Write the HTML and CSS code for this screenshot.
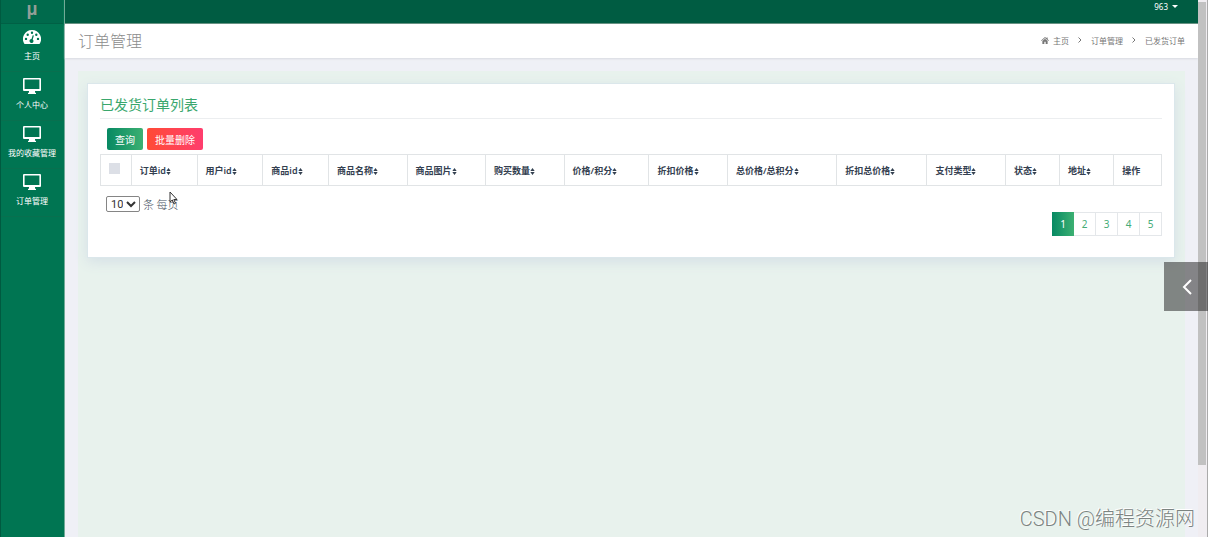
FILE: index.html
```html
<!DOCTYPE html>
<html lang="zh-CN">
<head>
<meta charset="utf-8">
<title>订单管理</title>
<link rel="stylesheet" href="styles.css">
</head>
<body>
<svg class="defs" aria-hidden="true">
  <symbol id="monitor" viewBox="0 0 18 16"><path fill-rule="evenodd" d="M1 0h16a1 1 0 0 1 1 1v11a1 1 0 0 1-1 1h-5v1.500l1 .5v1H5v-1l1-.5V13H1a1 1 0 0 1-1-1V1a1 1 0 0 1 1-1zm.6 1.500v9.500h14.800V1.500z"/></symbol>
  <symbol id="gauge" viewBox="0 0 18 14"><path fill-rule="evenodd" d="M9 0a9 9 0 0 1 7.500 14h-15A9 9 0 0 1 9 0zM3 7.700a1.200 1.200 0 1 0 0 2.400 1.200 1.200 0 0 0 0-2.400zM4.700 3.500a1.200 1.200 0 1 0 0 2.400 1.200 1.200 0 0 0 0-2.400zM9 1.600A1.200 1.200 0 1 0 9 4a1.200 1.200 0 0 0 0-2.400zm4.300 1.900a1.200 1.200 0 1 0 0 2.400 1.200 1.200 0 0 0 0-2.400zM15 7.700a1.200 1.200 0 1 0 0 2.400 1.200 1.200 0 0 0 0-2.400zM9.700 5.200 8.500 9a2 2 0 1 0 1.200.4l1.200-3.900z"/></symbol>
  <symbol id="sort" viewBox="0 0 5 8"><path d="M0 3.400 2.500 0 5 3.400zM0 4.600h5L2.500 8z"/></symbol>
</svg>
<div class="app">
  <nav class="sidebar">
    <div class="brand">μ</div>
    <a class="nav-item" href="#"><svg class="nav-icon"><use href="#gauge"/></svg>主页</a>
    <a class="nav-item" href="#"><svg class="nav-icon"><use href="#monitor"/></svg>个人中心</a>
    <a class="nav-item" href="#"><svg class="nav-icon"><use href="#monitor"/></svg>我的收藏管理</a>
    <a class="nav-item" href="#"><svg class="nav-icon"><use href="#monitor"/></svg>订单管理</a>
  </nav>
  <div class="page">
    <header class="topbar"><button class="user" type="button">963 <span class="caret"></span></button></header>
    <div class="titlebar">
      <h1>订单管理</h1>
      <nav class="crumbs">
        <svg class="home" viewBox="0 0 18 16"><path d="M9 0 0 8l1.200 1.300L9 2.500l7.800 6.800L18 8l-3-2.700V1h-2.500v2zM9 4 3 9.200V16h4.500v-5h3v5H15V9.200z"/></svg>
        <a href="#">主页</a>
        <svg class="sep" viewBox="0 0 4 6"><path d="M.5.5 3 3 .5 5.500"/></svg>
        <a href="#">订单管理</a>
        <svg class="sep" viewBox="0 0 4 6"><path d="M.5.5 3 3 .5 5.500"/></svg>
        <span>已发货订单</span>
      </nav>
    </div>
    <main class="content">
      <section class="card">
        <h2>已发货订单列表</h2>
        <div class="actions">
          <button class="btn query" type="button">查询</button>
          <button class="btn delete" type="button">批量删除</button>
        </div>
        <table>
          <colgroup>
            <col class="c-check"><col class="c-id"><col class="c-id"><col class="c-id"><col class="c-four"><col class="c-four"><col class="c-four"><col class="c-price"><col class="c-four"><col class="c-total"><col class="c-five"><col class="c-four"><col class="c-two"><col class="c-two"><col>
          </colgroup>
          <thead><tr>
            <th><input type="checkbox" class="check" aria-label="全选"></th>
            <th>订单id<svg class="sort"><use href="#sort"/></svg></th>
            <th>用户id<svg class="sort"><use href="#sort"/></svg></th>
            <th>商品id<svg class="sort"><use href="#sort"/></svg></th>
            <th>商品名称<svg class="sort"><use href="#sort"/></svg></th>
            <th>商品图片<svg class="sort"><use href="#sort"/></svg></th>
            <th>购买数量<svg class="sort"><use href="#sort"/></svg></th>
            <th>价格/积分<svg class="sort"><use href="#sort"/></svg></th>
            <th>折扣价格<svg class="sort"><use href="#sort"/></svg></th>
            <th>总价格/总积分<svg class="sort"><use href="#sort"/></svg></th>
            <th>折扣总价格<svg class="sort"><use href="#sort"/></svg></th>
            <th>支付类型<svg class="sort"><use href="#sort"/></svg></th>
            <th>状态<svg class="sort"><use href="#sort"/></svg></th>
            <th>地址<svg class="sort"><use href="#sort"/></svg></th>
            <th>操作</th>
          </tr></thead>
        </table>
        <div class="page-size">
          <select id="size"><option>10</option><option>25</option></select>
          <label for="size">条 每页</label>
        </div>
        <div class="pager">
          <button class="current" type="button">1</button><button type="button">2</button><button type="button">3</button><button type="button">4</button><button type="button">5</button>
        </div>
      </section>
    </main>
  </div>
  <div class="scroll-track"><div class="scroll-thumb"></div></div>
</div>
<button class="drawer" type="button" aria-label="展开"><svg viewBox="0 0 10 16"><path d="M9 1 2 8l7 7"/></svg></button>
<svg class="pointer" viewBox="0 0 9 14" aria-hidden="true"><path d="M1 1v10l2.300-2 1.700 4 1.500-.7L4.800 8.500H8z"/></svg>
<div class="watermark">CSDN @编程资源网</div>
</body>
</html>
```
FILE: styles.css
```css
* { box-sizing: border-box; }
body {
  margin: 0;
  overflow: hidden;
  font-family: "Noto Sans", "Noto Sans CJK SC", sans-serif;
  font-size: 9px;
  color: #455060;
}
a { color: inherit; text-decoration: none; }
button { font-family: inherit; cursor: pointer; }
h1, h2 { margin: 0; font-weight: 300; font-family: "Noto Sans CJK SC", sans-serif; }
.defs { display: none; }
.app { display: flex; height: 100vh; }

.sidebar {
  width: 65px;
  flex: none;
  padding-right: 1px;
  background: #007552;
  border-left: 1px solid #005a40;
  border-right: 1px solid #71aa97;
}
.brand {
  height: 24px;
  background: #006a4c;
  border-bottom: 1px solid #006045;
  color: #929f98;
  font: 700 18px/18px "Liberation Sans", sans-serif;
  text-align: center;
}
.nav-item {
  display: flex;
  flex-direction: column;
  align-items: center;
  gap: 4px;
  height: 48px;
  margin-bottom: 1px;
  padding-top: 5px;
  border-bottom: 1px solid #08704f;
  color: #fff;
  font-size: 8px;
  line-height: 14px;
  white-space: nowrap;
}
.nav-item:nth-child(n+3) { margin-bottom: 0; }
.nav-icon { width: 18px; height: 16px; flex: none; fill: #fff; }

.page { flex: 1; min-width: 0; display: flex; flex-direction: column; background: #eff0f6; }
.topbar {
  display: flex;
  justify-content: flex-end;
  height: 24px;
  flex: none;
  padding-right: 20px;
  background: #005c42;
  border-bottom: 1px solid #5e8c7c;
}
.user {
  display: flex;
  align-items: center;
  gap: 4px;
  height: 12px;
  padding: 0;
  border: 0;
  background: none;
  color: #fff;
  font-size: 8px;
}
.caret { border: 3px solid transparent; border-top-color: #fff; border-bottom: 0; }
.titlebar {
  display: flex;
  align-items: center;
  justify-content: space-between;
  height: 34px;
  flex: none;
  padding: 0 13px 2px;
  background: #fff;
  box-shadow: 0 1px 2px #d8dae0;
}
h1 { color: #8c8c8c; font-size: 16px; line-height: 24px; }
.crumbs { display: flex; align-items: center; color: #777; font-size: 8px; }
.crumbs a, .crumbs span { font-family: "Noto Sans CJK SC", sans-serif; }
.home { width: 8px; height: 7px; margin-right: 4px; fill: #777; }
.sep { width: 4px; height: 6px; margin: 0 9px; fill: none; stroke: #777; }

.content { flex: 1; margin: 13px 13px 0; padding: 12px 10px 12px 9px; background: #e8f2ed; }
.card {
  padding: 11px 12px 21px;
  background: #fff;
  border: 1px solid #dbe7eb;
  box-shadow: 0 4px 12px #d5e0e6;
}
h2 {
  padding-bottom: 4px;
  border-bottom: 1px solid #eceef0;
  color: #3aa76d;
  font-size: 14px;
  font-weight: 400;
  line-height: 19px;
}
.actions { display: flex; gap: 4px; padding: 9px 7px 4px; }
.btn {
  height: 22px;
  padding: 0 8px;
  border: 0;
  border-radius: 2px;
  color: #fff;
  font-size: 10px;
}
.query { background: linear-gradient(90deg, #078963, #3cb072); }
.delete { background: linear-gradient(90deg, #ff4b35, #ff3d6e); }

table { width: 100%; table-layout: fixed; border-collapse: collapse; }
th {
  height: 31px;
  padding: 2px 0 0 8px;
  border: 1px solid #e1e4e6;
  color: #344050;
  font-size: 9px;
  font-weight: 600;
  line-height: 12px;
  text-align: left;
  white-space: nowrap;
}
.c-check { width: 2.9%; }
.c-id { width: 6.2%; }
.c-two { width: 5.1%; }
.c-four { width: 7.4%; }
.c-price { width: 8%; }
.c-five { width: 8.5%; }
.c-total { width: 10.3%; }
.sort { width: 5px; height: 7px; fill: #344050; vertical-align: -1px; }
.check {
  display: block;
  appearance: none;
  width: 11px;
  height: 11px;
  margin: 0 0 6px;
  background: #dcdfe6;
}
.page-size {
  display: flex;
  align-items: center;
  gap: 3px;
  padding: 10px 6px 0;
  font-size: 11px;
  line-height: 16px;
}
.page-size label { font-family: "Noto Sans CJK SC", sans-serif; font-weight: 300; }
select {
  width: 34px;
  height: 16px;
  padding: 0;
  border: 1px solid #858585;
  border-radius: 2px;
  background: #fff;
  color: #333;
  font: 11px Roboto, sans-serif;
}
.pager { display: flex; justify-content: flex-end; }
.pager button {
  width: 22px;
  height: 24px;
  padding: 0;
  border: 1px solid #e4e7ea;
  border-left-width: 0;
  background: #fff;
  color: #45ab76;
  font-size: 10px;
}
.pager .current { border: 0; background: linear-gradient(90deg, #078963, #3cb072); color: #fff; }

.scroll-track { width: 10px; flex: none; padding: 2px 1px 0 0; background: #f0edf1; border-right: 1px solid #aaa; }
.scroll-thumb { height: 86.5%; background: #c1c1c1; }

.drawer {
  position: absolute;
  top: 262px;
  right: 0;
  width: 44px;
  height: 49px;
  padding: 0 0 0 18px;
  border: 0;
  background: rgba(40, 40, 40, .54);
}
.drawer svg { display: block; width: 10px; height: 16px; fill: none; stroke: #fff; stroke-width: 2; }
.pointer { position: absolute; top: 191px; left: 169px; width: 9px; height: 14px; fill: #fff; stroke: #333; }
.watermark {
  position: absolute;
  right: 13px;
  bottom: 4px;
  color: #7c8481;
  font: 300 20px/28px Roboto, "Noto Sans CJK SC", sans-serif;
  text-shadow: -1px -1px 0 #fff;
}
```
